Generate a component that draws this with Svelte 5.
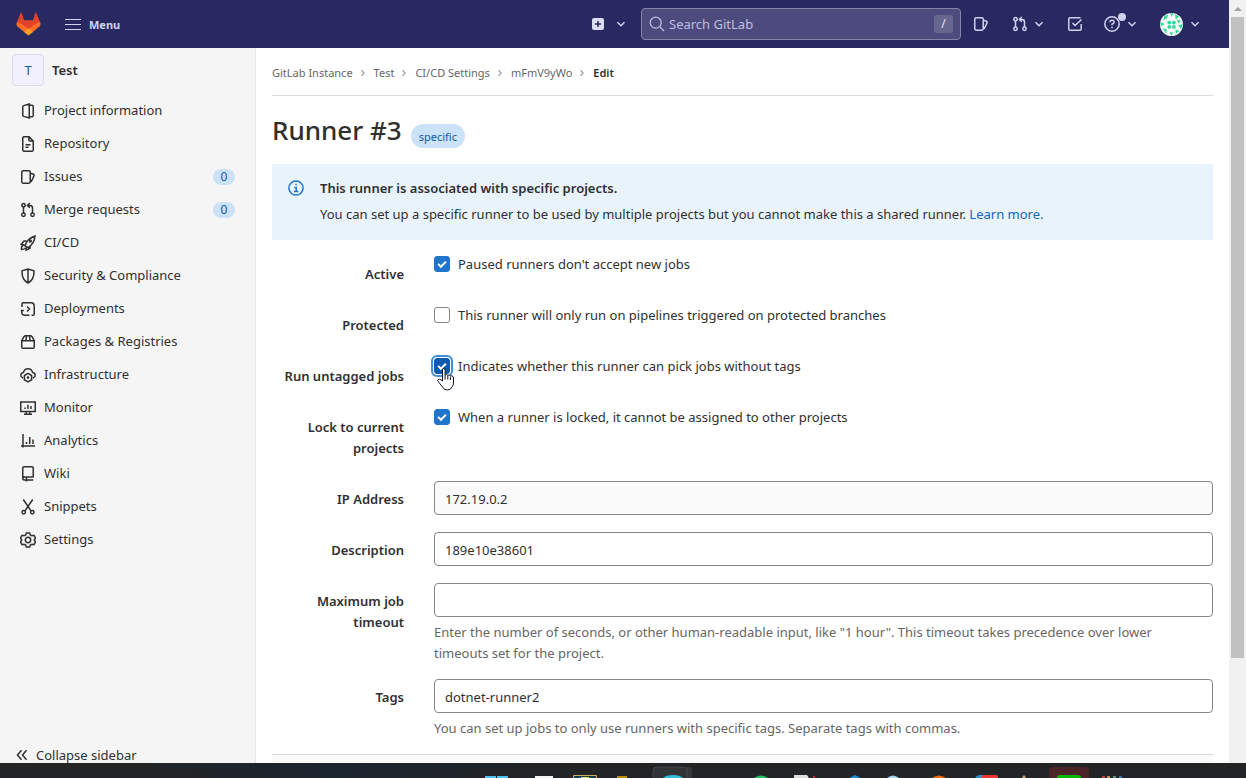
<script>
  const stroke = {
    project: '<path d="M9.25 1 3.7 2.6Q2.75 2.9 2.75 3.8V12.2Q2.75 13.1 3.7 13.4L9.25 15zM9.5 2.25H12q1.25 0 1.25 1.25v9q0 1.25-1.25 1.25H9.5"/>',
    doc: '<path d="M9 .75H4Q2.75.75 2.75 2v12q0 1.25 1.25 1.25h8q1.25 0 1.25-1.25V5zM8.9 1v2.8q0 1.2 1.2 1.2H13M5.5 8.75h5M5.5 11.25h3"/>',
    issues: '<rect x="1.75" y="1.75" width="8.5" height="12.5" rx="1.4"/><path d="m10.5 4.3 3 1q.9.4.6 1.3l-3 6.4"/>',
    merge: '<circle cx="3.5" cy="3.2" r="1.7"/><circle cx="3.5" cy="12.8" r="1.7"/><circle cx="12.5" cy="12.8" r="1.7"/><path d="M3.5 5v6M12.5 11V6q0-2.5-2.5-2.5H8M9.8.9 7.4 3.4l2.4 2.4"/>',
    rocket: '<path d="M5 10.9Q6.5 4 15 1 14.5 8 8.3 12.6zM6.6 6.1H4L1.2 9.5l3.8.8M10.2 11l-.2 2.3-4 1.9.5-3.5M3.4 10.2q-2.2.7-2 4.2 2.6.3 4-1.5"/><circle cx="10.3" cy="6" r="1"/>',
    shield: '<path d="M8 1 2 2.7Q1.6 11.5 8 15q6.4-3.5 6-12.3zM8 1v14"/>',
    deploy: '<path d="M2 6V3q0-1.25 1.25-1.25H11q3.25 0 3.25 3.25v8q0 1.25-1.25 1.25h-1.5M9.5 14.25H5Q1.75 14.25 1.75 11V9.5M.8 9.5h3M7 5.5 9.5 8 7 10.5"/>',
    package: '<path d="M1.75 6.75h12.5V13q0 1.25-1.25 1.25H3Q1.75 14.25 1.75 13zM1.8 6.6 4 2.6q.5-.85 1.5-.85h5q1 0 1.5.85l2.2 4M6.5 2 6 6.5M9.5 2l.5 4.5"/>',
    cloud: '<path d="M3.2 11Q.8 10.2.8 8.2.9 6 3.4 5.6 4.4 1.8 8 1.8t4.6 3.8q2.5.4 2.6 2.6 0 2-2.4 2.8M8 6.4l3.6 2.1v4.2L8 14.8l-3.6-2.1V8.5z"/><circle cx="8" cy="10.6" r=".6"/>',
    monitor: '<path d="M.75 2h14.5v9.5H.75zM4 14.25h8M6.2 11.5v2.6M9.8 11.5v2.6M5 7.5V9M8 4.8V9M11 6v3"/>',
    chart: '<path d="M3 1v13.5M1 13h14M6.5 9v2M9.7 4v7M13 6.5V11"/>',
    book: '<path d="M13.25 11.25V2q0-1.25-1.25-1.25H4Q2.75.75 2.75 2v10.5q0 1.5 1.5 1.5h9M3 12q.2-1 1.3-1h9M6.5 11v4.5"/>',
    scissors: '<circle cx="3.7" cy="13.2" r="1.7"/><circle cx="12.3" cy="13.2" r="1.7"/><path d="M3.3.5 11 11.8M12.7.5 5 11.8"/>',
    gear: '<path d="M6.3 1h3.4l.6 1.9 1.7.9 2-.5 1.5 2.9L14.2 8l1.3 1.8-1.5 2.9-2-.5-1.7.9-.6 1.9H6.3l-.6-1.9-1.7-.9-2 .5L.5 9.8 1.8 8 .5 6.2 2 3.3l2 .5 1.7-.9z"/><circle cx="8" cy="8" r="2.7"/>',
    down: '<path d="m4.5 6.2 3.5 3.5 3.5-3.5"/>',
    right: '<path d="m6 4.2 3.5 3.8L6 11.8"/>',
    collapse: '<path d="M7.5 3.2 3.5 8l4 4.8M12.5 3.2 8.5 8l4 4.8"/>',
    search: '<circle cx="6.7" cy="6.7" r="5.5"/><path d="m11 11 4 4"/>',
    todo: '<path d="M14.2 8v5q0 1.25-1.25 1.25H3Q1.75 14.25 1.75 13V3Q1.75 1.75 3 1.75h10.5M5.5 7 8 9.5l6.5-6"/>',
    help: '<circle cx="8" cy="8" r="7.2"/><path d="M5.9 6.3Q6 4.3 8 4.3t2.1 1.9Q10.1 7.4 8 8.3v1M8 10.7v1.5"/>',
    info: '<circle cx="8" cy="8" r="7.1"/><path d="M6.3 7.5h1.95v4M6 11.6h4.3M7.3 4.6h1.5"/>'
  };

  const nav = [
    { label: 'Project information', icon: 'project' },
    { label: 'Repository', icon: 'doc' },
    { label: 'Issues', icon: 'issues', count: 0 },
    { label: 'Merge requests', icon: 'merge', count: 0 },
    { label: 'CI/CD', icon: 'rocket' },
    { label: 'Security & Compliance', icon: 'shield' },
    { label: 'Deployments', icon: 'deploy' },
    { label: 'Packages & Registries', icon: 'package' },
    { label: 'Infrastructure', icon: 'cloud' },
    { label: 'Monitor', icon: 'monitor' },
    { label: 'Analytics', icon: 'chart' },
    { label: 'Wiki', icon: 'book' },
    { label: 'Snippets', icon: 'scissors' },
    { label: 'Settings', icon: 'gear' }
  ];
  const crumbs = ['GitLab Instance', 'Test', 'CI/CD Settings', 'mFmV9yWo'];

  let checks = $state([
    { id: 'active', label: 'Active', text: "Paused runners don't accept new jobs", on: true },
    { id: 'protected', label: 'Protected', text: 'This runner will only run on pipelines triggered on protected branches', on: false },
    { id: 'untagged', label: 'Run untagged jobs', text: 'Indicates whether this runner can pick jobs without tags', on: true, active: true },
    { id: 'locked', label: 'Lock to current projects', text: 'When a runner is locked, it cannot be assigned to other projects', on: true }
  ]);
  let fields = $state([
    { id: 'ip', label: 'IP Address', value: '172.19.0.2', readonly: true },
    { id: 'description', label: 'Description', value: '189e10e38601' },
    { id: 'timeout', label: 'Maximum job timeout', value: '', help: 'Enter the number of seconds, or other human-readable input, like "1 hour". This timeout takes precedence over lower timeouts set for the project.' },
    { id: 'tags', label: 'Tags', value: 'dotnet-runner2', help: 'You can set up jobs to only use runners with specific tags. Separate tags with commas.' }
  ]);
</script>

{#snippet icon(name)}
  <svg class="icon" viewBox="0 0 16 16" aria-hidden="true">{@html stroke[name]}</svg>
{/snippet}

<div class="screen">
  <div class="window">
    <div class="page">
      <header>
        <a class="logo" href="#home" aria-label="GitLab">
          <svg viewBox="0 0 26 24">
            <path fill="#e24329" d="M13 24 1 10 5 .3q.4-.6.8 0L8.4 8h9.2L20.2.3q.4-.6.8 0L25 10z" />
            <path fill="#fc6d26" d="M1 10q-1.3 3 .8 4.900L13 24l11.200-9.100Q26.300 13 25 10q-3.200.7-5.600 2.400L13 17.200l-6.400-4.800Q4.200 10.700 1 10z" />
            <path fill="#fca326" d="m8.600 20.400 4.400 3.400 4.400-3.400q-1.800-2.100-4.400-3.700-2.600 1.600-4.400 3.700z" />
          </svg>
        </a>
        <button class="menu"><span class="bars"></span>Menu</button>
        <div class="tools">
          <button class="new" aria-label="Create new"><svg class="plus" viewBox="0 0 12 12"><rect width="12" height="12" rx="2" fill="#dcdcf5" /><path d="M6 3v6M3 6h6" stroke="#292961" stroke-width="1.5" /></svg>{@render icon('down')}</button>
          <label class="search">
            {@render icon('search')}
            <input type="text" placeholder="Search GitLab" aria-label="Search GitLab" />
            <kbd>/</kbd>
          </label>
          <a class="t-issues" href="#issues" aria-label="Issues">{@render icon('issues')}</a>
          <button class="t-merge" aria-label="Merge requests">{@render icon('merge')}{@render icon('down')}</button>
          <a class="t-todo" href="#todos" aria-label="To-Do List">{@render icon('todo')}</a>
          <button class="t-help" aria-label="Help">{@render icon('help')}{@render icon('down')}<span class="dot"></span></button>
          <button class="t-user" aria-label="Account">
            <svg class="avatar" viewBox="0 0 24 24">
              <circle cx="12" cy="12" r="12" fill="#f7faf9" />
              <g fill="#2fdc96"><circle cx="9.7" cy="10" r="2" /><circle cx="14.5" cy="10" r="2" /><circle cx="9.7" cy="14.5" r="2" /><circle cx="14.5" cy="14.5" r="2" /><path d="M4.500 3.500 8.500 1.200 7.500 5.500 3.500 7.500zM15.500 1.200l4.500 2.500-3.500 3zM17 7l4.800 1-2 3zM.5 9.500l4.500 2L1 14zM2.500 16l4.500 1-.5 4.500zM10 20.200h3.500L12 24zM16 17.500l4.500 1-4 3.500zM19 13l4.700-1.500-1.500 5.500zM10.500.3h3.500L12 4z" /></g>
            </svg>{@render icon('down')}
          </button>
        </div>
      </header>

      <div class="body">
        <aside>
          <a class="context" href="#test"><span class="tile">T</span>Test</a>
          <nav>
            {#each nav as item}
              <a href="#{item.icon}">{@render icon(item.icon)}<span>{item.label}</span>{#if item.count !== undefined}<b>{item.count}</b>{/if}</a>
            {/each}
          </nav>
          <button class="collapse">{@render icon('collapse')}Collapse sidebar</button>
        </aside>

        <main>
          <nav class="crumbs" aria-label="Breadcrumbs">
            {#each crumbs as crumb}<a href="#crumb">{crumb}</a>{@render icon('right')}{/each}
            <strong>Edit</strong>
          </nav>
          <h1>Runner #3 <span class="badge">specific</span></h1>
          <section class="alert">
            {@render icon('info')}
            <div>
              <h2>This runner is associated with specific projects.</h2>
              <p>You can set up a specific runner to be used by multiple projects but you cannot make this a shared runner. <a href="#learn">Learn more.</a></p>
            </div>
          </section>
          <form>
            {#each checks as c}
              <div class="row option">
                <label class="name" for={c.id}>{c.label}</label>
                <div class="check">
                  <input id={c.id} type="checkbox" class:active={c.active} bind:checked={c.on} />
                  <label for={c.id}>{c.text}</label>
                  {#if c.active}
                    <svg class="pointer" viewBox="0 0 18 23" aria-hidden="true">
                      <path fill="#fff" stroke="#15152b" d="M5.500 13V2q0-1.500 1.300-1.500T8.100 2v5.500q.2-1 1.300-1t1.400 1.200q.3-.8 1.300-.7t1.300 1.300q.3-.6 1.200-.5 1.900.2 1.900 2.200v5q0 2-1.300 3.700-1.200 3.300-5 3.300-3.200 0-4.700-3L1.500 14q-1.300-1.800-.3-2.500T4 11.800zM8.100 7.500v4M10.800 8v3.500M13.400 9v3" />
                    </svg>
                  {/if}
                </div>
              </div>
            {/each}
            {#each fields as f}
              <div class="row">
                <label class="name" for={f.id}>{f.label}</label>
                <div class="field">
                  <input id={f.id} type="text" readonly={f.readonly} bind:value={f.value} />
                  {#if f.help}<p>{f.help}</p>{/if}
                </div>
              </div>
            {/each}
            <div class="actions"></div>
          </form>
        </main>
      </div>
    </div>
    <div class="scrollbar" aria-hidden="true"><i class="arrow"></i><i class="thumb"></i></div>
  </div>

  <div class="taskbar" aria-hidden="true">
    <svg viewBox="0 0 1246 15" preserveAspectRatio="xMidYMin slice">
      <rect x="653" y="4" width="39" height="14" rx="4" fill="#34383a" />
      <rect x="653" y="4" width="34" height="14" rx="4" fill="#303436" stroke="#44484a" />
      <rect x="1049" y="4" width="40" height="14" rx="4" fill="#4b2428" />
      <path fill="#4cc2ee" d="M485 13h11v2h-11zM497 13h11v2h-11z" />
      <path fill="#f3f3f3" d="M535 13h18v2h-18z" />
      <path fill="#173d4c" stroke="#c9b16a" d="M573.5 12.5h23v4h-23z" />
      <path fill="#e8d56b" d="M581 14h8v1h-8z" />
      <path fill="#c08a12" d="M617 13h10v2h-10z" />
      <path fill="#32bfd8" d="M663 15q3-3 10-3t10 3z" />
      <path fill="#21c063" d="M754 15q6-5 14 0z" />
      <path fill="#dedede" d="M794 12h13l2 3h-15z" />
      <path fill="#c22b46" d="M813 13h2v2h-2z" />
      <path fill="#168bd8" d="m849 15 6-3 6 3z" />
      <path fill="#a8d4e8" d="M887 15q6-5 12 0z" />
      <path fill="#ee6c0b" d="M932 15q7-5 14 0z" />
      <path fill="#3189ca" d="M975 15q3-4 8-3v3z" />
      <rect x="982" y="12" width="16" height="6" rx="2" fill="#ef3434" />
      <path fill="#d5b080" d="m1022 15 2-3 2 3z" />
      <rect x="1057" y="12" width="24" height="6" rx="3" fill="#08b800" />
      <path fill="#b54a3c" d="M1102 13h3v2h-3z" /><path fill="#d9813e" d="M1107 13h3v2h-3z" /><path fill="#5b8f86" d="M1113 13h3v2h-3z" /><path fill="#3c6eb8" d="M1119 13h3v2h-3z" />
    </svg>
  </div>
</div>

<style>
  :global(body) { margin: 0; }
  .screen, .screen :global(*) { box-sizing: border-box; }
  .screen { height: 100vh; display: flex; flex-direction: column; overflow: hidden; font: 13px/21px "Noto Sans", "Open Sans", sans-serif; color: #303030; background: #fff; }
  .window { flex: 1; min-height: 0; display: flex; }
  .page { flex: 1; min-width: 0; display: flex; flex-direction: column; }
  a { color: inherit; text-decoration: none; }
  button { font: inherit; color: inherit; border: 0; background: none; padding: 0; display: flex; align-items: center; cursor: pointer; }
  input { font: inherit; color: inherit; }
  .icon { width: 16px; height: 16px; flex: none; fill: none; stroke: currentColor; stroke-width: 1.5; }

  header { height: 48px; flex: none; background: #292961; color: #d1d1f0; display: flex; align-items: center; padding: 0 26px 0 16px; }
  .logo svg { display: block; width: 25px; height: 24px; }
  .menu { margin-left: 24px; gap: 8px; font-weight: 700; font-size: 11px; }
  .bars { width: 16px; height: 11px; border: solid #d1d1f0; border-width: 1px 0; background: linear-gradient(#d1d1f0, #d1d1f0) 0 center / 100% 1px no-repeat; }
  .tools { margin-left: auto; display: flex; align-items: center; }
  .new { gap: 9px; margin-right: 12px; }
  .plus { width: 12px; height: 12px; }
  .search { width: 320px; height: 32px; display: flex; align-items: center; gap: 4px; padding: 0 7px; border: 1px solid #8383ab; border-radius: 4px; background: #4d4b7d; color: #bdbde0; }
  .search .icon { stroke-width: 1.3; }
  .search input { flex: 1; min-width: 0; border: 0; padding: 0; outline: 0; background: none; }
  .search input::placeholder { color: #bdbde0; opacity: 1; }
  kbd { width: 19px; height: 18px; border-radius: 3px; background: #67668f; color: #e4e4f5; text-align: center; font: 12px/18px "Noto Sans", sans-serif; }
  .tools a, .t-merge, .t-help, .t-user { display: flex; }
  .t-issues { margin-left: 12px; }
  .t-merge { margin-left: 23px; gap: 3px; }
  .t-todo { margin-left: 20px; }
  .t-help { margin-left: 21px; gap: 4px; position: relative; }
  .t-help .dot { position: absolute; left: 14px; top: -3px; width: 8px; height: 8px; border-radius: 50%; background: #d1d1f0; }
  .t-user { margin-left: 20px; gap: 4px; }
  .avatar { width: 23px; height: 23px; }

  .body { flex: 1; min-height: 0; display: flex; }
  aside { width: 256px; flex: none; background: #f5f5f5; border-right: 1px solid #e8e8e8; display: flex; flex-direction: column; overflow: hidden; }
  .context { display: flex; align-items: center; gap: 8px; padding: 6px 12px; font-weight: 600; }
  .tile { width: 32px; height: 32px; border: 1px solid #dcdcf0; border-radius: 4px; background: #f2f0ff; color: #2d5a86; font-weight: 400; text-align: center; line-height: 30px; }
  aside nav { padding: 2px 20px 0; }
  aside nav a { height: 33px; display: flex; align-items: center; gap: 8px; }
  aside nav span { flex: 1; }
  aside b { width: 22px; height: 16px; border-radius: 8px; background: #cbe2f9; color: #0b5cad; font-weight: 400; font-size: 12px; line-height: 16px; text-align: center; }
  .collapse { margin-top: auto; height: 16px; padding-left: 14px; gap: 6px; white-space: nowrap; }

  main { flex: 1; min-width: 0; padding: 0 16px; overflow: hidden; }
  .crumbs { height: 48px; display: flex; align-items: center; padding-top: 2px; border-bottom: 1px solid #dbdbdb; font-size: 11px; color: #666; }
  .crumbs .icon { width: 12px; height: 12px; margin: 0 5px 0 4px; stroke: #999; }
  .crumbs strong { color: #303030; font-weight: 600; }
  h1 { margin: 0; height: 68px; display: flex; align-items: center; gap: 9px; font-size: 26px; line-height: 36px; font-weight: 500; }
  .badge { margin-top: 12px; padding: 1px 8px 0; border-radius: 12px; background: #cbe2f9; color: #0b5cad; font-size: 11px; line-height: 23px; font-weight: 400; }
  .alert { display: flex; gap: 16px; padding: 14px 16px 15px; background: #e9f3fc; }
  .alert .icon { color: #1f75cb; margin-top: 2px; }
  h2 { margin: 0 0 5px; font-size: 13px; line-height: 21px; font-weight: 600; }
  .alert p { margin: 0; }
  .alert a { color: #1068bf; }
  form { padding-top: 14px; }
  .row { display: grid; grid-template-columns: 132px 1fr; column-gap: 30px; margin-bottom: 17px; }
  .name { padding-top: 8px; text-align: right; font-weight: 600; }
  .option { min-height: 34px; }
  .option .name { padding-top: 10px; }
  .option:nth-child(4) { padding-bottom: 5px; }
  .check { position: relative; display: flex; align-items: flex-start; gap: 8px; }
  .check input { appearance: none; width: 16px; height: 16px; margin: 2px 0 0; border: 1px solid #868686; border-radius: 3px; background: #fff; display: grid; place-items: center; }
  .check input:checked { border-color: #1f75cb; background: #1f75cb; }
  .check input:checked::after { content: ""; width: 6px; height: 3px; border: solid #fff; border-width: 0 0 2px 2px; box-sizing: border-box; width: 8px; height: 5px; transform: translateY(-1px) rotate(-45deg); }
  .check input.active { border-color: #0b5cad; background: #0b5cad; box-shadow: 0 0 0 1px #fff, 0 0 0 3px #428fdc; }
  .pointer { position: absolute; left: 3px; top: 12px; width: 18px; height: 23px; }
  .field input { display: block; width: 100%; height: 34px; padding: 2px 10px 0; border: 1px solid #868686; border-radius: 4px; background: #fff; }
  .field input:read-only { background: #fafafa; }
  .field p { margin: 5px 0 -2px; padding-right: 16px; color: #666; }
  .actions { height: 60px; border-top: 1px solid #dbdbdb; background: #fafafa; }

  .scrollbar { width: 17px; flex: none; display: flex; flex-direction: column; align-items: center; background: #f1f1f1; }
  .arrow { margin: 7px 0; border: solid transparent; border-width: 0 4px 4px; border-bottom-color: #a3a3a3; }
  .thumb { width: 13px; height: 84%; margin-top: -1px; background: #c1c1c1; }
  .taskbar { height: 15px; flex: none; overflow: hidden; background: linear-gradient(90deg, #222426 12%, #1a2430 27%, #222426 42%); }
  .taskbar svg { display: block; width: 100%; height: 15px; }
</style>
